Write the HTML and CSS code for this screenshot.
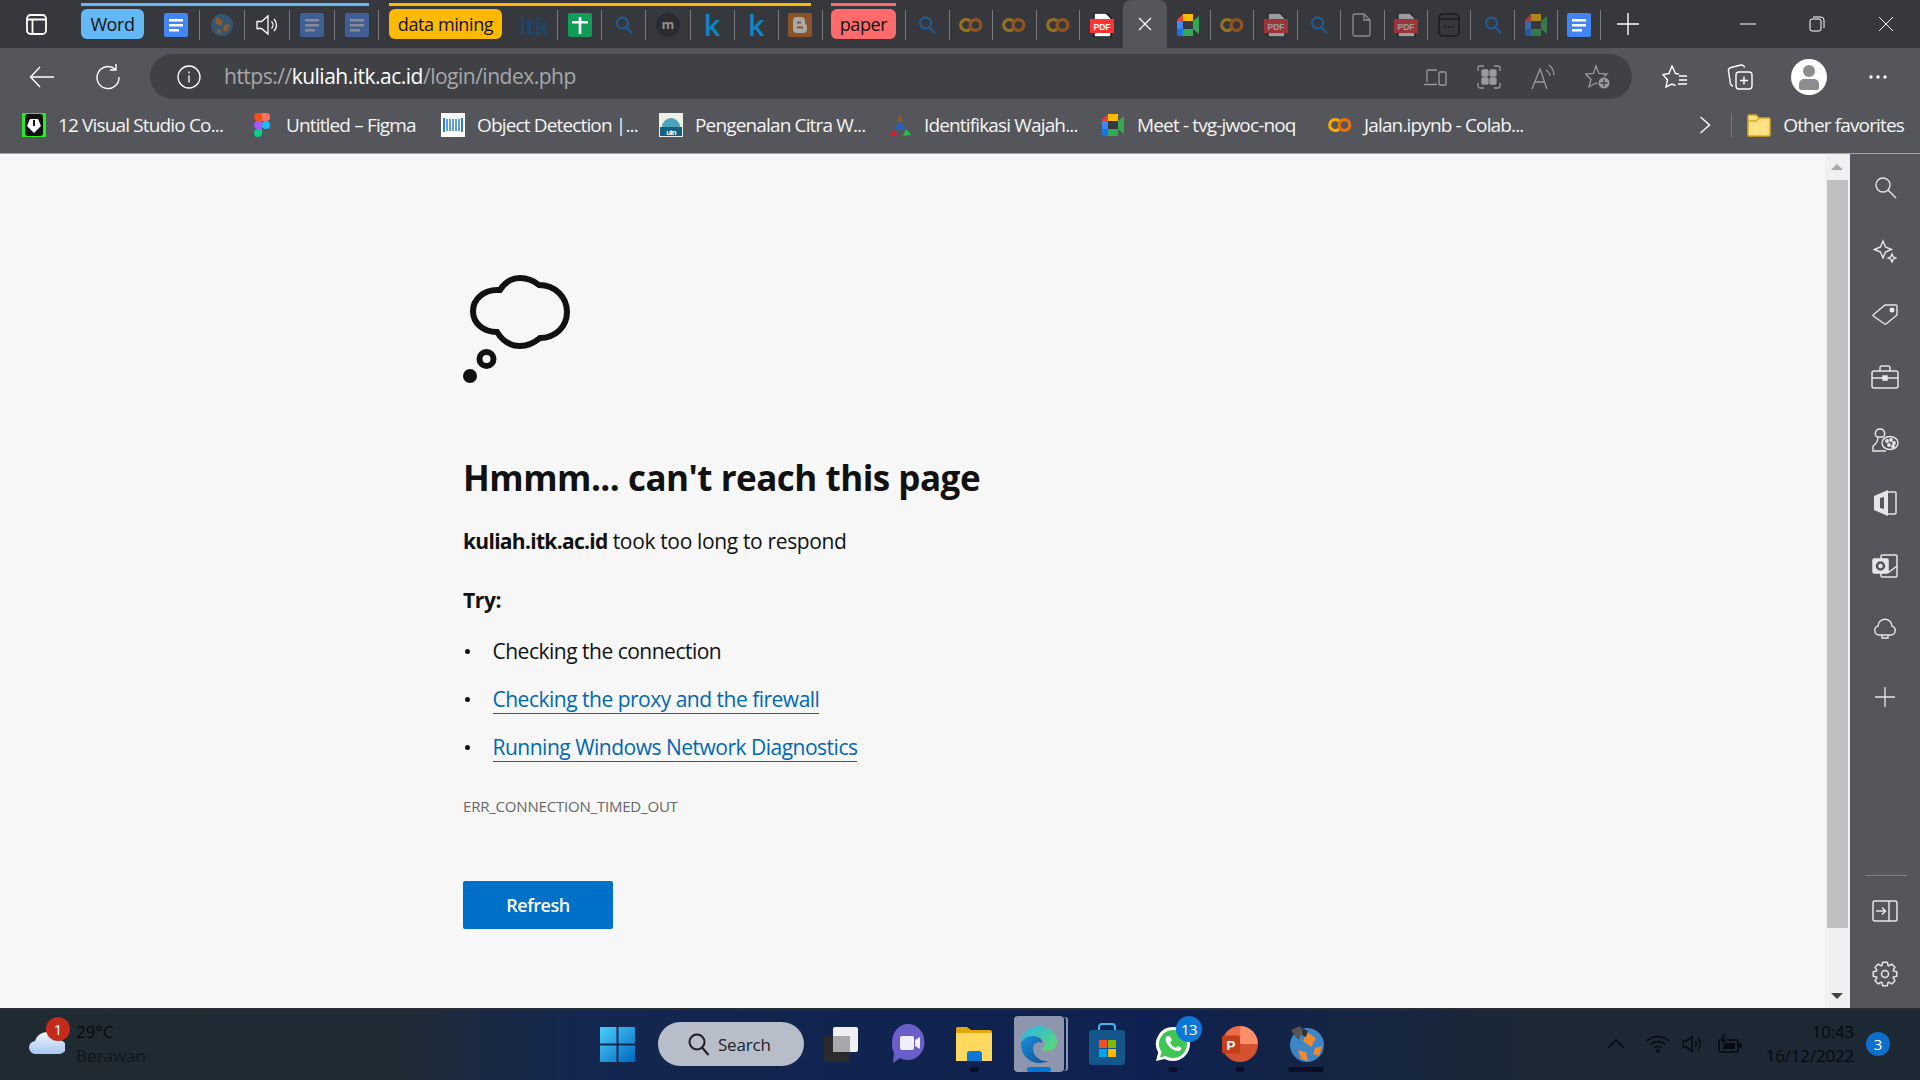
FILE: index.html
```html
<!DOCTYPE html>
<html lang="en">
<head>
  <meta charset="utf-8">
  <title>Can't reach this page</title>
  <link rel="stylesheet" href="styles.css">
</head>
<body>
  <svg class="defs" width="0" height="0">
    <symbol id="doc" viewBox="0 0 24 24"><rect width="24" height="24" rx="2" fill="#4285f4"/><path d="M5 6h14v2.6H5zM5 11h14v2.6H5zM5 16h10v2.6H5z" fill="#fff"/></symbol>
    <symbol id="search" viewBox="0 0 24 24"><circle cx="10.500" cy="10" r="5.500" fill="none" stroke="#1f5d96" stroke-width="2"/><path d="M14.500 14.500L20 20" stroke="#1f5d96" stroke-width="2"/></symbol>
    <symbol id="co" viewBox="0 0 24 24"><g fill="none" stroke="#f9ab00" stroke-width="3.200"><path d="M11 8a5.500 5.500 0 1 0 0 8"/><circle cx="16.500" cy="12" r="5.300" stroke="#e8710a"/></g></symbol>
    <symbol id="pdf" viewBox="0 0 24 24"><path d="M4 0h12l5 5v19H4z" fill="#fff" stroke="#111" stroke-width="1.400"/><rect x="0" y="6" width="24" height="14" fill="#f33"/></symbol>
    <symbol id="meet" viewBox="0 0 24 24"><path d="M1 7l6-6v7H1z" fill="#ea4335"/><path d="M7 1h10v7H7z" fill="#fbbc04"/><path d="M1 8h6v8H1z" fill="#4285f4"/><path d="M1 16h6v7H3a2 2 0 0 1-2-2z" fill="#1a73e8"/><path d="M7 16h10v7H7z" fill="#34a853"/><path d="M17 8l6-5v18l-6-5z" fill="#34a853"/><rect x="7" y="8" width="10" height="8" fill="#37383d"/></symbol>
  </svg>

  <header class="tabstrip">
    <div class="app-btn">
      <svg width="21" height="21" viewBox="0 0 21 21" fill="none" stroke="#fff" stroke-width="1.800"><rect x="1" y="1" width="19" height="19" rx="3.500"/><path d="M1 5.500h19M6.500 5.500V20"/></svg>
    </div>

    <div class="group group-word">
      <div class="chip chip-word">Word</div>
      <div class="tab tab-first"><svg class="ico"><use href="#doc"/></svg></div><i class="sep"></i>
      <div class="tab"><svg class="ico" viewBox="0 0 24 24"><circle cx="12" cy="12" r="11" fill="#34566f"/><path d="M6 4l7 4-2 5-6-3zM14 12l6-1-3 8-4-2z" fill="#8d5a30"/><path d="M8 16l3 1-1 4-3-2z" fill="#8d5a30"/></svg></div><i class="sep"></i>
      <div class="tab"><svg class="ico" viewBox="0 0 24 24" fill="none" stroke="#fff" stroke-width="1.300"><path d="M2 8.500h4.500L13 3v18l-6.500-5.500H2z"/><path d="M16.500 8.500a5 5 0 0 1 0 7M19 6a8.500 8.500 0 0 1 0 12"/></svg></div><i class="sep"></i>
      <div class="tab"><svg class="ico" viewBox="0 0 24 24"><rect width="24" height="24" rx="2" fill="#3f5f95"/><path d="M5 6h14v2.600H5zM5 11h14v2.600H5zM5 16h10v2.600H5z" fill="#8a8b90"/></svg></div><i class="sep"></i>
      <div class="tab tab-last"><svg class="ico" viewBox="0 0 24 24"><rect width="24" height="24" rx="2" fill="#3f5f95"/><path d="M5 6h14v2.600H5zM5 11h14v2.600H5zM5 16h10v2.600H5z" fill="#8a8b90"/></svg></div>
    </div>
    <i class="sep sep-after"></i>

    <div class="group group-mining">
      <div class="chip chip-mining">data mining</div>
      <div class="tab tab-first tab-itk">itk</div><i class="sep"></i>
      <div class="tab"><svg class="ico" viewBox="0 0 24 24"><rect width="24" height="24" rx="2" fill="#0f9d58"/><path d="M4 8h16v2.500H4zM10.700 4h2.600v17h-2.600z" fill="#fff"/></svg></div><i class="sep"></i>
      <div class="tab"><svg class="ico"><use href="#search"/></svg></div><i class="sep"></i>
      <div class="tab"><span class="tab-m">m</span></div><i class="sep"></i>
      <div class="tab tab-k">k</div><i class="sep"></i>
      <div class="tab tab-k">k</div><i class="sep"></i>
      <div class="tab tab-last"><svg class="ico" viewBox="0 0 24 24"><rect width="24" height="24" rx="2" fill="#8a532a"/><path d="M9 4h4a4 4 0 0 1 4 4v2a2 2 0 0 0 2 2v4a4 4 0 0 1-4 4H9a4 4 0 0 1-4-4V8a4 4 0 0 1 4-4z" fill="#a9a9a9"/><path d="M9 9.500h4M9 14.500h6" stroke="#8a532a" stroke-width="2"/></svg></div>
    </div>
    <i class="sep sep-after sep-mining"></i>

    <div class="group group-paper">
      <div class="chip chip-paper">paper</div>
    </div>
    <i class="sep sep-after"></i>

    <div class="tab tab-run"><svg class="ico"><use href="#search"/></svg></div><i class="sep"></i>
    <div class="tab tab-run dim-co"><svg class="ico"><use href="#co"/></svg></div><i class="sep"></i>
    <div class="tab tab-run dim-co"><svg class="ico"><use href="#co"/></svg></div><i class="sep"></i>
    <div class="tab tab-run dim-co"><svg class="ico"><use href="#co"/></svg></div><i class="sep"></i>
    <div class="tab tab-run"><svg class="ico" viewBox="0 0 24 24"><use href="#pdf"/><text class="pdf-label" x="12" y="16.500">PDF</text></svg></div>
    <div class="tab-active">
      <svg width="14" height="14" viewBox="0 0 14 14" stroke="#fff" stroke-width="1.300"><path d="M1 1l12 12M13 1L1 13"/></svg>
    </div>
    <div class="tab tab-wide"><svg class="ico"><use href="#meet"/></svg></div><i class="sep"></i>
    <div class="tab tab-run dim-co"><svg class="ico"><use href="#co"/></svg></div><i class="sep"></i>
    <div class="tab tab-run dim"><svg class="ico" viewBox="0 0 24 24"><use href="#pdf"/><text class="pdf-label" x="12" y="16.500">PDF</text></svg></div><i class="sep"></i>
    <div class="tab tab-run"><svg class="ico"><use href="#search"/></svg></div><i class="sep"></i>
    <div class="tab tab-run"><svg class="ico" viewBox="0 0 24 24" fill="none" stroke="#8b8c90" stroke-width="1.300"><path d="M5 1h9l6 6v14a2 2 0 0 1-2 2H5a2 2 0 0 1-2-2V3a2 2 0 0 1 2-2zM14 1v6h6"/></svg></div><i class="sep"></i>
    <div class="tab tab-run dim"><svg class="ico" viewBox="0 0 24 24"><use href="#pdf"/><text class="pdf-label" x="12" y="16.500">PDF</text></svg></div><i class="sep"></i>
    <div class="tab tab-run"><svg class="ico" viewBox="0 0 24 24" fill="none" stroke="#1c1d20" stroke-width="1.600"><rect x="2" y="1" width="20" height="22" rx="4"/><path d="M2 6h20"/><path d="M7.500 14h1.500M11.300 14h1.500M15 14h1.500" stroke-width="2"/></svg></div><i class="sep"></i>
    <div class="tab tab-run"><svg class="ico"><use href="#search"/></svg></div><i class="sep"></i>
    <div class="tab tab-run dim-meet"><svg class="ico"><use href="#meet"/></svg></div><i class="sep"></i>
    <div class="tab tab-run"><svg class="ico"><use href="#doc"/></svg></div><i class="sep"></i>
    <div class="tab-new">
      <svg width="22" height="22" viewBox="0 0 22 22" stroke="#fff" stroke-width="1.400"><path d="M11 0v22M0 11h22"/></svg>
    </div>

    <div class="win-controls">
      <div class="win-btn"><svg width="16" height="16" viewBox="0 0 16 16" stroke="#fff"><path d="M0 8h16"/></svg></div>
      <div class="win-btn"><svg width="16" height="16" viewBox="0 0 16 16" fill="none" stroke="#fff"><rect x="1" y="3" width="11" height="12" rx="2"/><path d="M4 1h8a3 3 0 0 1 3 3v8"/></svg></div>
      <div class="win-btn"><svg width="16" height="16" viewBox="0 0 16 16" stroke="#fff"><path d="M1 1l14 14M15 1L1 15"/></svg></div>
    </div>
  </header>

  <nav class="toolbar">
    <div class="nav-btn nav-back"><svg width="26" height="22" viewBox="0 0 26 22" fill="none" stroke="#fff" stroke-width="1.400"><path d="M25 11H2M11 1L1.500 11 11 21"/></svg></div>
    <div class="nav-btn nav-reload"><svg width="26" height="26" viewBox="0 0 26 26" fill="none" stroke="#fff" stroke-width="1.400"><path d="M20.500 5.500A11 11 0 1 0 24 13M21 0v6h-6"/></svg></div>
    <div class="address">
      <svg class="info" width="24" height="24" viewBox="0 0 24 24" fill="none" stroke="#fff" stroke-width="1.300"><circle cx="12" cy="12" r="11"/><path d="M12 10.500v7M12 6.500v2"/></svg>
      <span class="url">https://<b>kuliah.itk.ac.id</b>/login/index.php</span>
      <div class="addr-icons">
        <svg width="24" height="24" viewBox="0 0 24 24" fill="none" stroke="#9a9a9d" stroke-width="1.300"><path d="M14 5H5a1 1 0 0 0-1 1v11M1 19.500h13"/><rect x="16" y="7" width="7" height="13" rx="1"/></svg>
        <svg width="24" height="24" viewBox="0 0 24 24" fill="none" stroke="#9a9a9d" stroke-width="1.300"><path d="M1 6V3a2 2 0 0 1 2-2h4M17 1h4a2 2 0 0 1 2 2v3M23 18v3a2 2 0 0 1-2 2h-4M7 23H3a2 2 0 0 1-2-2v-3"/><rect x="5" y="5" width="6" height="6" rx="1" fill="#9a9a9d"/><rect x="13" y="5" width="6" height="6" rx="1" fill="#9a9a9d"/><rect x="5" y="13" width="6" height="6" rx="1" fill="#9a9a9d"/><rect x="13" y="13" width="6" height="6" rx="1" fill="#9a9a9d"/></svg>
        <svg width="24" height="26" viewBox="0 0 24 26" fill="none" stroke="#9a9a9d" stroke-width="1.300"><path d="M1 25L9 5l7 20M4 18h10M15 6a8 8 0 0 1 4 6M18 1a13 13 0 0 1 5 10"/></svg>
        <svg width="26" height="26" viewBox="0 0 26 26" fill="none" stroke="#9a9a9d" stroke-width="1.300"><path d="M11 2l3 7.500 8 .5-6 5.500 2 7.500-7-4-7 4 2-7.500L.5 10l8-.5z"/><circle cx="19" cy="19" r="6" fill="#9a9a9d" stroke="#404145" stroke-width="1"/><path d="M19 15.500v7M15.500 19h7" stroke="#404145"/></svg>
      </div>
    </div>
    <div class="tool-icons">
      <svg width="26" height="24" viewBox="0 0 26 24" fill="none" stroke="#fff" stroke-width="1.400"><path d="M17 9l-3.500-.5L10 1 7 8.500 1 9.500l4.500 5.500L4 22l6-3 3.500 1.500M17 11h8M17 15h8M16 19h9"/></svg>
      <svg width="26" height="28" viewBox="0 0 26 28" fill="none" stroke="#fff" stroke-width="1.400"><rect x="9" y="9" width="16" height="17" rx="3"/><path d="M17 13.500v8M13 17.500h8M6 23a3 3 0 0 1-2.500-2L1.500 8A3 3 0 0 1 4 4.500L14 2a3 3 0 0 1 3.500 2.500"/></svg>
      <div class="avatar"><svg width="24" height="26" viewBox="0 0 24 26" fill="#8d8d8f"><circle cx="12" cy="7" r="6"/><path d="M2 24v-4a5 5 0 0 1 5-5h10a5 5 0 0 1 5 5v4a2 2 0 0 1-2 2H4a2 2 0 0 1-2-2z"/></svg></div>
      <svg class="more" width="20" height="6" viewBox="0 0 20 6" fill="#fff"><circle cx="3" cy="3" r="1.700"/><circle cx="10" cy="3" r="1.700"/><circle cx="17" cy="3" r="1.700"/></svg>
    </div>
  </nav>

  <div class="bookmarks">
    <a class="bm bm-1"><svg class="ico" viewBox="0 0 24 24"><rect width="24" height="24" fill="#2e2"/><rect x="3" y="1" width="18" height="22" rx="3" fill="#111"/><path d="M8 6h8l3 7-7 7-7-7z" fill="#fff"/><path d="M12 7v6" stroke="#111" stroke-width="2"/></svg>12 Visual Studio Co...</a>
    <a class="bm bm-2"><svg class="ico" viewBox="0 0 24 24"><path d="M8 0h4v8H8a4 4 0 0 1 0-8z" fill="#f24e1e"/><path d="M12 0h4a4 4 0 0 1 0 8h-4z" fill="#ff7262"/><path d="M8 8h4v8H8a4 4 0 0 1 0-8z" fill="#a259ff"/><circle cx="16" cy="12" r="4" fill="#1abcfe"/><path d="M8 16h4v4a4 4 0 1 1-4-4z" fill="#0acf83"/></svg>Untitled – Figma</a>
    <a class="bm bm-3"><svg class="ico" viewBox="0 0 24 24"><rect width="24" height="24" fill="#fff"/><path d="M3 5v14M21 5v14" stroke="#2b7fd6" stroke-width="2"/><path d="M6 6v12M9 6v12M12 6v12M15 6v12M18 6v12" stroke="#2b7fd6" stroke-width="1.500"/></svg>Object Detection |...</a>
    <a class="bm bm-4"><svg class="ico" viewBox="0 0 24 24"><rect width="24" height="24" fill="#eef0e4"/><path d="M3 14a9 9 0 0 1 18 0z" fill="#4aa3b8"/><rect x="1" y="14" width="22" height="9" fill="#155f80"/><text class="uin-label" x="12" y="22">uin</text></svg>Pengenalan Citra W...</a>
    <a class="bm bm-5"><svg class="ico" viewBox="0 0 24 24"><path d="M12 0l3 9H9z" fill="#8a5a2b"/><path d="M12 8l6 8H6z" fill="#2a62b8"/><path d="M6 16l-4 6 7 1z" fill="#d81e1e"/><path d="M18 16l5 6-8 1z" fill="#22c24a"/></svg>Identifikasi Wajah...</a>
    <a class="bm bm-6"><svg class="ico"><use href="#meet"/></svg>Meet - tvg-jwoc-noq</a>
    <a class="bm bm-7"><svg class="ico"><use href="#co"/></svg>Jalan.ipynb - Colab...</a>
    <div class="bm-end">
      <svg class="bm-more" width="12" height="18" viewBox="0 0 12 18" fill="none" stroke="#fff" stroke-width="1.400"><path d="M1.500 1l9 8-9 8"/></svg>
      <i class="bm-sep"></i>
      <a class="bm"><svg class="ico" viewBox="0 0 24 24"><path d="M1 3a1 1 0 0 1 1-1h7l3 3h10a1 1 0 0 1 1 1v16a1 1 0 0 1-1 1H2a1 1 0 0 1-1-1z" fill="#ffe083" stroke="#d9a520" stroke-width="1.500"/><path d="M1 8h8l3-3" fill="none" stroke="#d9a520" stroke-width="1.500"/></svg>Other favorites</a>
    </div>
  </div>

  <div class="middle">
    <main class="page">
      <svg class="thought" width="110" height="108" viewBox="0 0 110 108">
        <path d="M37 15C42 7 49 3 57 3C65 3 71 6 76 10C92 10 104 22 104 37C104 52 92 63 77 63C71 68 65 71 57 71C47 71 39 65 34 57C20 57 10 48 10 36C10 24 21 15 34 15Z" fill="none" stroke="#111" stroke-width="6"/>
        <circle cx="23.500" cy="84" r="7" fill="none" stroke="#111" stroke-width="6"/>
        <circle cx="7" cy="101" r="7" fill="#111"/>
      </svg>
      <h1>Hmmm... can't reach this page</h1>
      <p class="reason"><b>kuliah.itk.ac.id</b> took too long to respond</p>
      <p class="try">Try:</p>
      <ul class="tips">
        <li>Checking the connection</li>
        <li><a href="#">Checking the proxy and the firewall</a></li>
        <li><a href="#">Running Windows Network Diagnostics</a></li>
      </ul>
      <div class="errcode">ERR_CONNECTION_TIMED_OUT</div>
      <button class="refresh">Refresh</button>
    </main>

    <div class="scrollbar">
      <i class="arrow-up"></i>
      <div class="thumb"></div>
      <i class="arrow-down"></i>
    </div>

    <aside class="sidebar">
      <div class="side-btn"><svg width="24" height="24" viewBox="0 0 24 24" fill="none" stroke="#e6e6e6" stroke-width="1.400"><circle cx="10" cy="9" r="7"/><path d="M15 14l8 8"/></svg></div>
      <div class="side-btn"><svg width="24" height="24" viewBox="0 0 24 24" fill="none" stroke="#e6e6e6" stroke-width="1.400"><path d="M10 2l2.500 6 6 2.500-6 2.500-2.500 6-2.500-6-6-2.500 6-2.500zM19 15l1.200 2.800L23 19l-2.800 1.200L19 23l-1.200-2.800L15 19l2.800-1.200z"/></svg></div>
      <div class="side-btn"><svg width="26" height="24" viewBox="0 0 26 24" fill="none" stroke="#e6e6e6" stroke-width="1.400"><path d="M1 13L13 3h11a1 1 0 0 1 1 1v9L14 22a1 1 0 0 1-1.300 0L1.300 14a1 1 0 0 1-.3-1z"/><circle cx="20" cy="8" r="1.800" fill="#e6e6e6"/></svg></div>
      <div class="side-btn"><svg width="28" height="24" viewBox="0 0 28 24" fill="none" stroke="#e6e6e6" stroke-width="1.500"><rect x="1" y="6" width="26" height="17" rx="2"/><path d="M9 6V3a2 2 0 0 1 2-2h6a2 2 0 0 1 2 2v3M1 13h26"/><rect x="12" y="11" width="4" height="4" fill="#e6e6e6"/></svg></div>
      <div class="side-btn"><svg width="28" height="26" viewBox="0 0 28 26" fill="none" stroke="#e6e6e6" stroke-width="1.400"><path d="M9 2a4.500 4.500 0 0 1 3 8H6a4.500 4.500 0 0 1 3-8zM7 10c0 4-2 7-5 9v5h13"/><ellipse cx="19" cy="16" rx="8" ry="6.500"/><circle cx="16" cy="14" r="1.200" fill="#e6e6e6"/><circle cx="20" cy="13" r="1.200" fill="#e6e6e6"/><circle cx="23" cy="16" r="1.200" fill="#e6e6e6"/><circle cx="18" cy="18" r="1.200" fill="#e6e6e6"/><circle cx="22" cy="19.500" r="1.200" fill="#e6e6e6"/></svg></div>
      <div class="side-btn"><svg width="24" height="28" viewBox="0 0 24 28"><path d="M1 7L15 1v26L1 21z" fill="#e6e6e6"/><path d="M15 3h7a1 1 0 0 1 1 1v20a1 1 0 0 1-1 1h-7" fill="none" stroke="#e6e6e6" stroke-width="1.500"/><path d="M7 9l4-1v12l-4-1z" fill="#55565b"/></svg></div>
      <div class="side-btn"><svg width="26" height="24" viewBox="0 0 26 24" fill="none" stroke="#e6e6e6" stroke-width="1.500"><rect x="9" y="1" width="16" height="22" rx="1"/><path d="M9 13l8 5 8-6"/><rect x="1" y="5" width="15" height="14" rx="1" fill="#e6e6e6"/><circle cx="8.500" cy="12" r="3.500" stroke="#55565b" stroke-width="2.500"/></svg></div>
      <div class="side-btn"><svg width="24" height="24" viewBox="0 0 24 24" fill="none" stroke="#e6e6e6" stroke-width="1.400"><path d="M6 18a4.500 4.500 0 0 1-1-8.800A7 7 0 0 1 19 9.200 4.500 4.500 0 0 1 18 18zM9 18v3h6v-3"/></svg></div>
      <div class="side-btn side-plus"><svg width="20" height="20" viewBox="0 0 20 20" stroke="#e6e6e6" stroke-width="1.300"><path d="M10 0v20M0 10h20"/></svg></div>
      <div class="side-bottom">
        <i class="side-rule"></i>
        <div class="side-btn"><svg width="26" height="22" viewBox="0 0 26 22" fill="none" stroke="#e6e6e6" stroke-width="1.500"><rect x="1" y="1" width="24" height="20" rx="2"/><path d="M17 1v20M4 11h9M10 7.500l3.500 3.500-3.500 3.500"/></svg></div>
        <div class="side-btn"><svg width="26" height="26" viewBox="0 0 26 26" fill="none" stroke="#e6e6e6" stroke-width="1.500" stroke-linejoin="round"><circle cx="13" cy="13" r="3.500"/><polygon points="24.78,10.71 24.78,15.29 21.46,16.08 21.16,16.8 22.95,19.71 19.71,22.95 16.8,21.16 16.08,21.46 15.29,24.78 10.71,24.78 9.92,21.46 9.2,21.16 6.29,22.95 3.05,19.71 4.84,16.8 4.54,16.08 1.22,15.29 1.22,10.71 4.54,9.92 4.84,9.2 3.05,6.29 6.29,3.05 9.2,4.84 9.92,4.54 10.71,1.22 15.29,1.22 16.08,4.54 16.8,4.84 19.71,3.05 22.95,6.29 21.16,9.2 21.46,9.92"/></svg></div>
      </div>
    </aside>
  </div>

  <footer class="taskbar">
    <div class="weather">
      <div class="weather-icon">
        <svg width="36" height="22" viewBox="0 0 36 22"><defs><linearGradient id="cloudfill" x1="0" y1="0" x2="0" y2="1"><stop offset="0" stop-color="#f0f6ff"/><stop offset="1" stop-color="#a9c6f0"/></linearGradient></defs><path d="M7 22a6.500 6.500 0 0 1-1-13C8 3 13 0 19 0c6 0 10 3 11 8a7 7 0 0 1 0 14z" fill="url(#cloudfill)"/></svg>
        <span class="weather-badge">1</span>
      </div>
      <div class="weather-text"><span>29°C</span><span class="weather-sub">Berawan</span></div>
    </div>

    <div class="task-center">
      <svg class="start" width="35" height="35" viewBox="0 0 35 35"><defs><linearGradient id="winfill" x1="0" y1="0" x2="1" y2="1"><stop offset="0" stop-color="#4dd0fb"/><stop offset="1" stop-color="#0067c0"/></linearGradient></defs><path d="M1 0h15.500v16.500H0V1a1 1 0 0 1 1-1zM18.500 0H34a1 1 0 0 1 1 1v15.500H18.500zM0 18.500h16.500V35H1a1 1 0 0 1-1-1zM18.500 18.500H35V34a1 1 0 0 1-1 1H18.500z" fill="url(#winfill)"/></svg>
      <div class="search-pill">
        <svg width="22" height="24" viewBox="0 0 22 24" fill="none" stroke="#1d1f24" stroke-width="2"><circle cx="9" cy="10" r="7.500"/><path d="M14.500 16l6 7"/></svg>
        <span>Search</span>
      </div>
      <div class="task-item"><svg width="36" height="36" viewBox="0 0 36 36"><rect x="1" y="10" width="26" height="26" rx="2" fill="#2b2b2d"/><rect x="10" y="1" width="25" height="25" rx="2" fill="#f0f0f2"/><rect x="10" y="10" width="17" height="16" fill="#a8a8ab"/></svg></div>
      <div class="task-item"><svg width="34" height="42" viewBox="0 0 34 42"><path d="M17 1a16.500 18 0 0 1 0 36c-3 0-6-1-8-2l-7 5 1-10A19 19 0 0 1 1 19 16 18 0 0 1 17 1z" fill="#6a5fc9"/><rect x="9" y="13" width="14" height="14" rx="2" fill="#f1effd"/><path d="M24 17l5-3v12l-5-3z" fill="#f1effd"/></svg></div>
      <div class="task-item task-open"><svg width="36" height="34" viewBox="0 0 36 34"><path d="M0 2a2 2 0 0 1 2-2h9l4 3h19a2 2 0 0 1 2 2v27H0z" fill="#e5a50d"/><path d="M0 6h36v28H0z" fill="#ffd95e"/><path d="M11 28a3 3 0 0 1 3-4h9a3 3 0 0 1 3 4v6H11z" fill="#0a78d4"/></svg></div>
      <div class="task-item task-edge">
        <svg width="38" height="38" viewBox="0 0 38 38"><defs><linearGradient id="edgefill" x1="0" y1="0" x2="1" y2="1"><stop offset="0" stop-color="#2bb4ec"/><stop offset="1" stop-color="#5edc6a"/></linearGradient><linearGradient id="edgeblue" x1="0" y1="0" x2="1" y2="1"><stop offset="0" stop-color="#1c8fd8"/><stop offset="1" stop-color="#0b4f96"/></linearGradient></defs><path d="M1 17C2 7 10 1 19 1c10 0 18 7 18 16 0 6-5 9-10 9-3 0-5-1-5-3 3-1 4-4 2-7-3-4-9-5-14-3-4 1-7 3-9 4z" fill="url(#edgefill)"/><path d="M1 17c3-4 7-6 12-6 5 0 10 3 9 7-5-2-9 1-9 6 0 6 6 12 13 12 2 0 3 0 4-1-3 2-7 3-11 3C9 38 0 29 1 17z" fill="url(#edgeblue)"/></svg>
      </div>
      <div class="task-item"><svg width="36" height="42" viewBox="0 0 36 42"><path d="M10 8V4a3 3 0 0 1 3-3h10a3 3 0 0 1 3 3v4" fill="none" stroke="#3bb6f0" stroke-width="2"/><rect y="7" width="36" height="35" rx="3" fill="#14558c"/><rect x="10" y="17" width="8" height="8" fill="#f25022"/><rect x="19" y="17" width="8" height="8" fill="#7fba00"/><rect x="10" y="26" width="8" height="8" fill="#00a4ef"/><rect x="19" y="26" width="8" height="8" fill="#ffb900"/></svg></div>
      <div class="task-item task-open task-wa">
        <svg width="36" height="36" viewBox="0 0 36 36"><path d="M18 1a17 17 0 0 1 0 34c-3 0-6-.8-8.500-2L1 35l2.200-8.500A17 17 0 0 1 18 1z" fill="#fff"/><path d="M18 4a14 14 0 0 1 0 28c-3 0-5-.8-7.500-2l-5.500 1.500L6.500 26A14 14 0 0 1 18 4z" fill="#3fc654"/><path d="M12 10c-2 2-2 5 1 9s7 6 10 6c2 0 3-1 3.500-3l-4-2-1.500 2c-3-1-5-3-6-6l2-1.500-2-4.500z" fill="#fff"/></svg>
        <span class="wa-badge">13</span>
      </div>
      <div class="task-item task-open"><svg width="36" height="38" viewBox="-2 0 38 38"><path d="M17 0a19 19 0 0 1 19 19H17z" fill="#ff8f6b"/><path d="M36 19a19 19 0 0 1-38 0h19z" fill="#d35230"/><path d="M17 0v19H-2A19 19 0 0 1 17 0z" fill="#ed6c47"/><rect x="-2" y="10" width="19" height="19" rx="2" fill="#c43e1c"/><text class="ppt-label" x="7.500" y="25">P</text></svg></div>
      <div class="task-item task-last"><svg width="36" height="40" viewBox="0 0 36 40"><circle cx="19" cy="21" r="17" fill="#3d85c6"/><path d="M19 8l9 6-5 9-8-6zM10 26l8 2 2 9-7-2zM27 24l7-2-3 10-6-2z" fill="#f08a2c"/><path d="M3 6l9-4 2 5-3 9-4-4z" fill="#555"/><path d="M14 4l6 3-2 6-4-2z" fill="#333"/></svg></div>
    </div>

    <div class="tray">
      <svg class="tray-chev" width="18" height="10" viewBox="0 0 18 10" fill="none" stroke="#070b0e" stroke-width="1.300"><path d="M1 9l8-8 8 8"/></svg>
      <svg class="tray-wifi" width="24" height="18" viewBox="0 0 24 18" fill="none" stroke="#070b0e" stroke-width="1.500"><path d="M1 6a16 16 0 0 1 22 0M4.500 9.500a11 11 0 0 1 15 0M8 13a6 6 0 0 1 8 0"/><circle cx="12" cy="16" r="1.700" fill="#070b0e" stroke="none"/></svg>
      <svg class="tray-vol" width="20" height="18" viewBox="0 0 20 18" fill="none" stroke="#070b0e" stroke-width="1.300"><path d="M1 6h3.500L10 1.500v15L4.500 12H1zM13 6a4 4 0 0 1 0 6M16 3.500a8 8 0 0 1 0 11"/></svg>
      <svg class="tray-batt" width="24" height="20" viewBox="0 0 24 20" fill="none" stroke="#070b0e" stroke-width="1.600"><rect x="1" y="6" width="19" height="12" rx="2"/><rect x="5" y="9" width="12" height="6" fill="#070b0e" stroke="none"/><rect x="21" y="9" width="2.500" height="5" rx="1" fill="#070b0e" stroke="none"/><path d="M5 0L2 8h3l-1 5 5-7H6l1.500-6z" fill="#070b0e" stroke="#1c2834" stroke-width="1"/></svg>
      <div class="clock"><span>10:43</span><span>16/12/2022</span></div>
      <span class="notif">3</span>
    </div>
  </footer>
</body>
</html>
```

FILE: styles.css
```css
html, body {
  margin: 0;
  padding: 0;
  height: 100%;
  overflow: hidden;
}

body {
  display: flex;
  flex-direction: column;
  width: 1920px;
  height: 1080px;
  font-family: "Open Sans", "Noto Sans", sans-serif;
  background-color: #f7f7f7;
  color: #111;
}

.defs {
  position: absolute;
}

.ico {
  width: 24px;
  height: 24px;
  display: block;
}

.pdf-label {
  fill: #fff;
  font-family: "Liberation Sans", sans-serif;
  font-size: 8.500px;
  font-weight: 700;
  text-anchor: middle;
}

.uin-label {
  fill: #fff;
  font-family: "Liberation Sans", sans-serif;
  font-size: 8px;
  font-weight: 700;
  text-anchor: middle;
}

.ppt-label {
  fill: #fff;
  font-family: "Liberation Sans", sans-serif;
  font-size: 14px;
  font-weight: 700;
  text-anchor: middle;
}

/* tab strip */
.tabstrip {
  display: flex;
  align-items: flex-start;
  height: 48px;
  flex: none;
  background-color: #37383d;
}

.app-btn {
  width: 81px;
  height: 48px;
  display: flex;
  align-items: center;
  justify-content: center;
  padding-right: 9px;
  box-sizing: border-box;
}

.sep {
  display: block;
  flex: none;
  width: 1px;
  height: 30px;
  margin-top: 10px;
  background-color: #7b7c80;
}

.sep-after {
  margin-left: 9px;
}

.sep-mining {
  margin-left: 11px;
}

.group {
  display: flex;
  align-items: flex-start;
  flex: none;
  margin-top: 3px;
  border-top: 3px solid;
}

.group .sep {
  margin-top: 4px;
}

.group-word {
  width: 288px;
  border-color: #63b8f6;
}

.group-mining {
  width: 422px;
  margin-left: 10px;
  border-color: #ffb900;
}

.group-paper {
  width: 65px;
  margin-left: 8px;
  border-color: #ff6b6b;
}

.chip {
  flex: none;
  height: 30px;
  margin-top: 3px;
  border-radius: 6px;
  color: #111;
  font-size: 18px;
  line-height: 30px;
  text-align: center;
  letter-spacing: -0.4px;
}

.chip-word {
  width: 63px;
  background-color: #63b8f6;
}

.chip-mining {
  width: 113px;
  background-color: #ffb900;
}

.chip-paper {
  width: 65px;
  background-color: #ff6b6b;
}

.tab {
  flex: none;
  box-sizing: border-box;
  width: 44px;
  height: 30px;
  margin-top: 4px;
  display: flex;
  align-items: center;
  justify-content: center;
}

.tabstrip > .tab {
  margin-top: 10px;
}

.group-mining .tab {
  width: 43.200px;
}

.group .tab-first {
  width: 55px;
  padding-left: 9px;
}

.group .tab-last {
  width: 34px;
  padding-left: 9px;
}

.tabstrip > .tab-run {
  width: 42.600px;
}

.tabstrip > .tab-active ~ .tab-run {
  width: 42.400px;
}

.tabstrip > .tab-wide {
  width: 43px;
}

.dim .ico {
  opacity: 0.5;
}

.dim-co .ico {
  opacity: 0.5;
}

.dim-meet .ico {
  opacity: 0.6;
}

.tab-itk {
  color: #1f4468;
  font-size: 24px;
  font-weight: 700;
  letter-spacing: -1px;
}

.tab-m {
  display: block;
  width: 24px;
  height: 24px;
  border-radius: 50%;
  background-color: #2b2c2f;
  color: #8f8f8f;
  font-size: 13px;
  font-weight: 700;
  line-height: 22px;
  text-align: center;
}

.tab-k {
  color: #0a88c5;
  font-size: 29px;
  font-weight: 600;
  line-height: 30px;
}

.tab-active {
  flex: none;
  width: 44px;
  height: 48px;
  display: flex;
  align-items: center;
  justify-content: center;
  border-radius: 8px 8px 0 0;
  background-color: #55565b;
}

.tab-new {
  flex: none;
  width: 54px;
  height: 48px;
  display: flex;
  align-items: center;
  justify-content: center;
}

.win-controls {
  display: flex;
  margin-left: auto;
}

.win-btn {
  width: 69px;
  height: 48px;
  display: flex;
  align-items: center;
  justify-content: center;
}

/* toolbar */
.toolbar {
  display: flex;
  flex: none;
  height: 51px;
  padding-top: 6px;
  box-sizing: border-box;
  background-color: #55565b;
}

.nav-btn {
  height: 45px;
  display: flex;
  align-items: center;
  justify-content: center;
  flex: none;
}

.nav-back {
  width: 84px;
}

.nav-reload {
  width: 48px;
  margin-right: 18px;
}

.address {
  flex: none;
  display: flex;
  align-items: center;
  width: 1482px;
  height: 45px;
  border-radius: 23px;
  background-color: #404145;
}

.info {
  margin-left: 27px;
}

.url {
  margin: 0 0 2px 23px;
  font-size: 21px;
  letter-spacing: -0.5px;
  color: #a7a8aa;
}

.url b {
  font-weight: 400;
  color: #fff;
}

.addr-icons {
  display: flex;
  align-items: center;
  gap: 30px;
  margin-left: auto;
  padding-right: 21px;
}

.tool-icons {
  display: flex;
  align-items: center;
  height: 45px;
  margin-left: 30px;
  gap: 39px;
}

.avatar {
  width: 36px;
  height: 36px;
  border-radius: 50%;
  background-color: #fff;
  display: flex;
  align-items: center;
  justify-content: center;
  margin-left: -1px;
}

.more {
  margin-left: 2px;
}

/* favorites bar */
.bookmarks {
  display: flex;
  align-items: center;
  flex: none;
  height: 55px;
  padding: 0 0 2px 22px;
  box-sizing: border-box;
  border-bottom: 1px solid #a4a4a6;
  background-color: #55565b;
}

.bm {
  display: flex;
  align-items: center;
  gap: 12px;
  color: #f4f4f4;
  font-size: 19px;
  letter-spacing: -0.85px;
  white-space: nowrap;
}

.bm-1 { width: 228px; }
.bm-2 { width: 191px; }
.bm-3 { width: 218px; }
.bm-4 { width: 229px; }
.bm-5 { width: 213px; }
.bm-6 { width: 227px; }

.bm-end {
  display: flex;
  align-items: center;
  margin-left: auto;
  padding-right: 16px;
}

.bm-sep {
  display: block;
  width: 1px;
  height: 24px;
  margin: 0 15px 0 20px;
  background-color: #77787c;
}

/* error page */
.middle {
  display: flex;
  flex: 1;
  min-height: 0;
}

.page {
  flex: 1;
  padding: 121px 0 0 463px;
  background-color: #f7f7f7;
}

.thought {
  display: block;
}

.page h1 {
  margin: 72px 0 0;
  font-size: 35px;
  font-weight: 700;
  line-height: 46px;
  letter-spacing: -0.5px;
  color: #111;
}

.reason,
.try {
  margin: 26px 0 0;
  font-size: 21px;
  line-height: 28px;
  letter-spacing: -0.35px;
}

.reason b {
  font-weight: 700;
  letter-spacing: -0.7px;
}

.try {
  margin-top: 31px;
  font-weight: 700;
}

.tips {
  margin: 23px 0 0;
  padding: 0 0 0 29.500px;
  list-style: none;
}

.tips li {
  position: relative;
  height: 28px;
  margin-bottom: 20px;
  font-size: 21px;
  line-height: 28px;
  letter-spacing: -0.5px;
}

.tips li::before {
  content: "";
  position: absolute;
  left: -28px;
  top: 12px;
  width: 5px;
  height: 5px;
  border-radius: 50%;
  background-color: #111;
}

.tips li:last-child {
  margin-bottom: 0;
}

.tips a {
  color: #0067b8;
  text-decoration: none;
  border-bottom: 1px solid #0067b8;
}

.errcode {
  margin-top: 35px;
  font-size: 15px;
  line-height: 20px;
  letter-spacing: -0.2px;
  color: #666;
}

.refresh {
  display: block;
  width: 150px;
  height: 48px;
  margin-top: 65px;
  border: 0;
  border-radius: 2px;
  background-color: #0070c9;
  color: #fff;
  font-family: inherit;
  font-size: 18px;
  font-weight: 600;
  letter-spacing: -0.45px;
}

.scrollbar {
  flex: none;
  width: 25px;
  display: flex;
  flex-direction: column;
  align-items: flex-end;
  background-color: #f0f0f0;
  box-sizing: border-box;
  padding-right: 2px;
}

.thumb {
  width: 21px;
  height: 748px;
  margin-top: 10px;
  background-color: #c0c0c0;
}

.arrow-up,
.arrow-down {
  display: block;
  width: 0;
  height: 0;
  margin-right: 5px;
  border-left: 6px solid transparent;
  border-right: 6px solid transparent;
}

.arrow-up {
  margin-top: 10px;
  border-bottom: 6px solid #a8a8a8;
}

.arrow-down {
  margin-top: 65px;
  border-top: 6px solid #444;
}

.sidebar {
  flex: none;
  width: 70px;
  display: flex;
  flex-direction: column;
  padding: 2px 0 3px;
  box-sizing: border-box;
  background-color: #55565b;
}

.side-btn {
  flex: none;
  height: 63px;
  display: flex;
  align-items: center;
  justify-content: center;
}

.side-plus {
  margin-top: 5px;
}

.side-bottom {
  margin-top: auto;
}

.side-rule {
  display: block;
  height: 1px;
  margin: 0 13px 3px 15px;
  background-color: #808186;
}

/* taskbar */
.taskbar {
  flex: none;
  display: flex;
  align-items: center;
  height: 72px;
  box-sizing: border-box;
  padding-bottom: 2px;
  border-top: 2px solid #2a2d33;
  background: linear-gradient(90deg, #1f2a32 0, #202b36 21%, #13274f 30%, #0f2150 60%, #16263f 72%, #1c2834 80%, #1c2834 100%);
}

.weather {
  display: flex;
  align-items: center;
  width: 600px;
  flex: none;
  padding-left: 29px;
  box-sizing: border-box;
}

.weather-icon {
  position: relative;
  width: 36px;
  height: 22px;
  margin-top: -3px;
}

.weather-icon svg {
  display: block;
}

.weather-badge {
  position: absolute;
  left: 17px;
  top: -15px;
  width: 24px;
  height: 24px;
  border-radius: 50%;
  background-color: #c42b1c;
  color: #fff;
  font-size: 15px;
  line-height: 24px;
  text-align: center;
}

.weather-text {
  display: flex;
  flex-direction: column;
  margin: 0 0 1px 11px;
  font-size: 17px;
  line-height: 24px;
  color: #070b0e;
}

.weather-sub {
  color: #10161c;
}

.task-center {
  display: flex;
  align-items: center;
  flex: none;
}

.start {
  display: block;
}

.search-pill {
  display: flex;
  align-items: center;
  gap: 8px;
  width: 146px;
  height: 44px;
  margin-left: 23px;
  padding-left: 30px;
  box-sizing: border-box;
  border-radius: 22px;
  background-color: #b8bec9;
  color: #20232a;
  font-size: 17px;
  letter-spacing: -0.2px;
}

.task-item {
  position: relative;
  flex: none;
  width: 66.500px;
  height: 56px;
  display: flex;
  align-items: center;
  justify-content: center;
}

.search-pill + .task-item {
  margin-left: 4px;
}

.task-open::after,
.task-edge::after,
.task-last::after {
  content: "";
  position: absolute;
  left: 50%;
  top: 51px;
  width: 9px;
  height: 5px;
  transform: translateX(-50%);
  border-radius: 3px;
  background-color: #0b0f25;
}

.task-edge {
  width: 50px;
  margin: 0 10px 0 6px;
  border-radius: 4px;
  background-color: #8e96ad;
  box-shadow: 3px 0 0 -1px #0f2150, 5px 0 0 -1px #8e96ad;
}

.task-edge::after {
  width: 24px;
  background-color: #0078d4;
}

.task-last::after {
  width: 36px;
}

.wa-badge {
  position: absolute;
  left: 36px;
  top: 0;
  width: 26px;
  height: 26px;
  border-radius: 50%;
  background-color: #0b78d8;
  color: #fff;
  font-size: 15px;
  line-height: 26px;
  text-align: center;
  letter-spacing: -0.5px;
}

.tray {
  display: flex;
  align-items: center;
  margin-left: auto;
  padding-right: 30px;
}

.tray-wifi {
  margin-left: 21px;
}

.tray-vol {
  margin-left: 12px;
}

.tray-batt {
  margin-left: 16px;
}

.clock {
  display: flex;
  flex-direction: column;
  align-items: flex-end;
  margin: 0 0 1px 24px;
  font-size: 17px;
  line-height: 24px;
  letter-spacing: -0.2px;
  color: #070b0e;
}

.notif {
  width: 24px;
  height: 24px;
  margin-left: 12px;
  border-radius: 50%;
  background-color: #0d6fc9;
  color: #fff;
  font-size: 15px;
  line-height: 24px;
  text-align: center;
}
```
